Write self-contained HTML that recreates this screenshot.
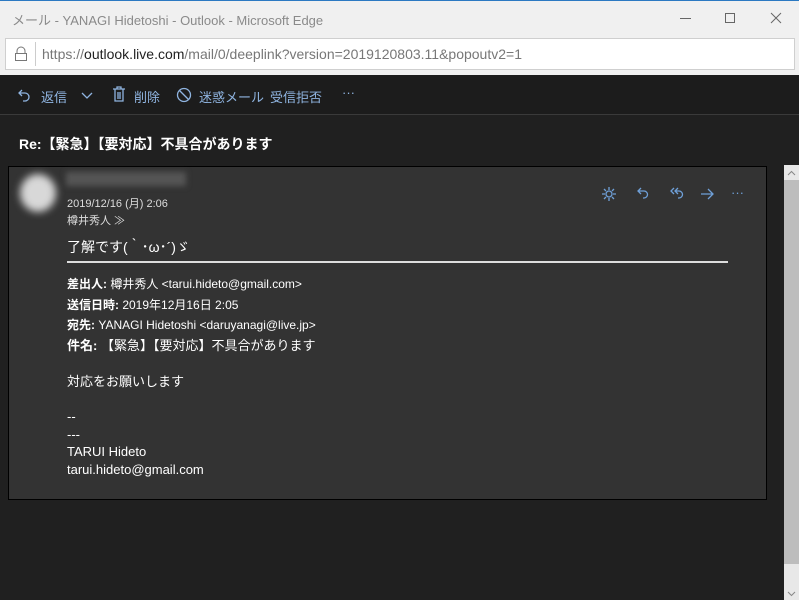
<!DOCTYPE html>
<html><head><meta charset="utf-8"><style>
*{margin:0;padding:0;box-sizing:border-box}
body{width:799px;height:600px;overflow:hidden;background:#202020;font-family:"Liberation Sans","Noto Sans CJK JP",sans-serif;position:relative}
.a{position:absolute;white-space:nowrap}
</style></head><body>
<div class="a" style="left:0;top:0;width:799px;height:75px;background:#f0f0f0;border-top:1px solid #2b79c2"></div>
<div class="a" style="left:12px;top:10px;font-size:13px;color:#8a8a8a">メール - YANAGI Hidetoshi - Outlook - Microsoft Edge</div>
<div class="a" style="left:680px;top:18px;width:11px;height:1px;background:#666"></div>
<div class="a" style="left:725px;top:13px;width:10px;height:10px;border:1px solid #666"></div>
<svg class="a" style="left:770px;top:12px" width="12" height="12"><path d="M1 1L11 11M11 1L1 11" stroke="#666"/></svg>
<div class="a" style="left:5px;top:38px;width:790px;height:32px;background:#fff;border:1px solid #cfcfcf"></div>
<svg class="a" style="left:14px;top:46px" width="14" height="16"><path d="M3 7V5a4 4 0 0 1 8 0v2" fill="none" stroke="#777"/><rect x="1.5" y="7.5" width="11" height="7" fill="none" stroke="#777"/></svg>
<div class="a" style="left:35px;top:42px;width:1px;height:24px;background:#ccc"></div>
<div class="a" style="left:42px;top:46px;font-size:14px;color:#777">https://<span style="color:#222">outlook.live.com</span>/mail/0/deeplink?version=2019120803.11&amp;popoutv2=1</div>
<div class="a" style="left:0;top:75px;width:799px;height:40px;background:#1c1c1c;border-bottom:1px solid #3a3a3a"></div>
<svg class="a" style="left:0;top:75px" width="360" height="40" fill="none" stroke="#8fb4e0" stroke-width="1.3">
<path d="M22 15l-3 3 3 3M19 18h6a3 3 0 0 1 0 8h-2"/>
<path d="M82 18l5 5 5-5"/>
<path d="M113 14h12M117 14v-2h4v2M115 14v12h8V14M118 17v7M120 17v7"/>
<circle cx="184" cy="20" r="6.5"/><path d="M179.5 15.5l9 9"/>
</svg>
<div class="a" style="left:41px;top:87px;font-size:13px;color:#8fb4e0">返信</div>
<div class="a" style="left:134px;top:87px;font-size:13px;color:#8fb4e0">削除</div>
<div class="a" style="left:199px;top:87px;font-size:13px;color:#8fb4e0">迷惑メール</div>
<div class="a" style="left:270px;top:87px;font-size:13px;color:#8fb4e0">受信拒否</div>
<div class="a" style="left:342px;top:85px;font-size:13px;color:#8fb4e0">···</div>
<div class="a" style="left:19px;top:134px;font-size:14px;font-weight:bold;color:#fff">Re:【緊急】【要対応】不具合があります</div>
<div class="a" style="left:8px;top:166px;width:759px;height:334px;background:#333;border:1px solid #000"></div>
<div class="a" style="left:20px;top:174px;width:36px;height:38px;border-radius:50%;background:#d8d8d8;filter:blur(4px)"></div>
<div class="a" style="left:66px;top:172px;width:120px;height:14px;background:#555;filter:blur(3px)"></div>
<div class="a" style="left:67px;top:195px;font-size:11px;color:#ddd">2019/12/16 (月) 2:06</div>
<div class="a" style="left:67px;top:212px;font-size:11px;color:#ddd">樽井秀人 ≫</div>
<svg class="a" style="left:595px;top:180px" width="160" height="28" fill="none" stroke="#6fa0d8" stroke-width="1.3">
<circle cx="14" cy="14" r="3"/><path d="M14 7v3M14 18v3M7 14h3M18 14h3M9 9l2 2M17 17l2 2M19 9l-2 2M11 17l-2 2"/>
<path d="M46 8l-3 3 3 3M43 11h6a3.5 3.5 0 0 1 0 7h-1"/>
<path d="M79 8l-3 3 3 3M83 8l-3 3 3 3M80 11h4a3.5 3.5 0 0 1 0 7h-1"/>
<path d="M106 14h12M113 9l5 5-5 5"/>
</svg>
<div class="a" style="left:731px;top:185px;font-size:13px;color:#6fa0d8">···</div>
<div class="a" style="left:67px;top:237px;font-size:14px;color:#fff">了解です(｀･ω･´)ゞ</div>
<div class="a" style="left:67px;top:261px;width:661px;height:2px;background:#ddd"></div>
<div class="a" style="left:67px;top:274px;font-size:12px;color:#fff;line-height:20.5px"><b>差出人:</b> 樽井秀人 &lt;tarui.hideto@gmail.com&gt;<br><b>送信日時:</b> 2019年12月16日 2:05<br><b>宛先:</b> YANAGI Hidetoshi &lt;daruyanagi@live.jp&gt;</div>
<div class="a" style="left:67px;top:335px;font-size:13px;color:#fff"><b>件名:</b> 【緊急】【要対応】不具合があります</div>
<div class="a" style="left:67px;top:373px;font-size:13px;color:#fff;line-height:17.6px">対応をお願いします<br><br>--<br>---<br>TARUI Hideto<br>tarui.hideto@gmail.com</div>
<div class="a" style="left:784px;top:165px;width:15px;height:435px;background:#e8e8e8"></div>
<div class="a" style="left:784px;top:180px;width:15px;height:384px;background:#bdbdbd"></div>
<svg class="a" style="left:784px;top:165px" width="15" height="435" fill="none" stroke="#888"><path d="M4 10l3.5-3.5L11 10M4 427l3.5 3.5L11 427"/></svg>
</body></html>
